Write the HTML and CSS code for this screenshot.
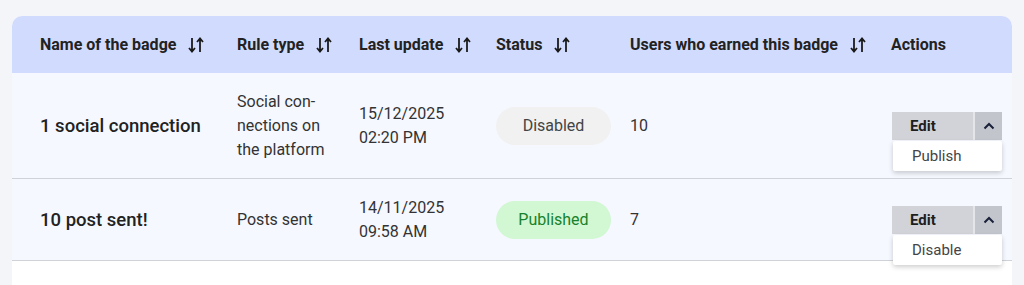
FILE: index.html
```html
<!DOCTYPE html>
<html lang="en">
<head>
    <meta charset="UTF-8">
    <meta name="viewport" content="width=device-width, initial-scale=1.0">
    <title>Badges</title>
    <link rel="stylesheet" href="styles.css">
</head>
<body>

<div class="table-card">
    <table class="badges-table">
        <thead>
            <tr>
                <th class="col-name"><span class="th-label">Name of the badge <svg class="sort-icon" viewBox="0 0 18 18"><path d="M5 2v13M2 12l3 3.5 3-3.5M13 16V3M10 6l3-3.5 3 3.5"/></svg></span></th>
                <th class="col-rule"><span class="th-label">Rule type <svg class="sort-icon" viewBox="0 0 18 18"><path d="M5 2v13M2 12l3 3.5 3-3.5M13 16V3M10 6l3-3.5 3 3.5"/></svg></span></th>
                <th class="col-date"><span class="th-label">Last update <svg class="sort-icon" viewBox="0 0 18 18"><path d="M5 2v13M2 12l3 3.5 3-3.5M13 16V3M10 6l3-3.5 3 3.5"/></svg></span></th>
                <th class="col-status"><span class="th-label">Status <svg class="sort-icon" viewBox="0 0 18 18"><path d="M5 2v13M2 12l3 3.5 3-3.5M13 16V3M10 6l3-3.5 3 3.5"/></svg></span></th>
                <th class="col-users"><span class="th-label">Users who earned this badge <svg class="sort-icon" viewBox="0 0 18 18"><path d="M5 2v13M2 12l3 3.5 3-3.5M13 16V3M10 6l3-3.5 3 3.5"/></svg></span></th>
                <th class="col-actions">Actions</th>
            </tr>
        </thead>
        <tbody>
            <tr>
                <td class="badge-name">1 social connection</td>
                <td class="rule-type">Social con&shy;nections on the platform</td>
                <td>15/12/2025<br>02:20 PM</td>
                <td><span class="status status-disabled">Disabled</span></td>
                <td>10</td>
                <td>
                    <div class="action-group">
                        <div class="btn-split">
                            <button class="btn-edit">Edit</button>
                            <button class="btn-toggle"><svg viewBox="0 0 12 8"><path d="M1.5 6.5L6 2l4.5 4.5"/></svg></button>
                        </div>
                        <div class="action-menu">Publish</div>
                    </div>
                </td>
            </tr>
            <tr>
                <td class="badge-name">10 post sent!</td>
                <td class="rule-type">Posts sent</td>
                <td>14/11/2025<br>09:58 AM</td>
                <td><span class="status status-published">Published</span></td>
                <td>7</td>
                <td>
                    <div class="action-group">
                        <div class="btn-split">
                            <button class="btn-edit">Edit</button>
                            <button class="btn-toggle"><svg viewBox="0 0 12 8"><path d="M1.5 6.5L6 2l4.5 4.5"/></svg></button>
                        </div>
                        <div class="action-menu">Disable</div>
                    </div>
                </td>
            </tr>
        </tbody>
    </table>
</div>

</body>
</html>
```

FILE: styles.css
```css
html, body {
    overflow: hidden;
}
body {
    font-family: Roboto, "Liberation Sans", Arial, sans-serif;
    margin: 0;
    padding: 16px 12px 0;
    background-color: #f4f5f9;
    color: #2b2b2b;
    height: 269px;
}
.table-card {
    background-color: white;
    border-radius: 10px 10px 0 0;
    overflow: hidden;
    height: 100%;
}
.badges-table {
    width: 100%;
    border-collapse: collapse;
    table-layout: fixed;
}
.badges-table th,
.badges-table td {
    box-sizing: border-box;
    padding: 0;
    text-align: left;
    vertical-align: middle;
}
.badges-table th {
    height: 57px;
    background-color: #d1dbfe;
    font-size: 16px;
    font-weight: 700;
    color: #222;
}
.th-label {
    display: inline-flex;
    align-items: center;
    gap: 11px;
}
.sort-icon {
    width: 18px;
    height: 18px;
    fill: none;
    stroke: #1a1a1a;
    stroke-width: 1.8;
}
.col-name { width: 225px; padding-left: 28px !important; }
.col-rule { width: 122px; }
.col-date { width: 137px; }
.col-status { width: 134px; }
.col-users { width: 261px; }
.col-actions { width: 121px; }

.badges-table tbody tr {
    background-color: #f5f8ff;
    border-bottom: 1px solid #cfd2d9;
}
.badges-table td {
    padding: 17px 0 16px;
    font-size: 16px;
    line-height: 24px;
    color: #333;
}
.badges-table td:first-child {
    padding-left: 28px;
}
.badge-name {
    font-size: 18.5px !important;
    font-weight: 500;
    color: #222 !important;
}
.rule-type {
    padding-right: 24px !important;
}
.status {
    display: inline-block;
    width: 115px;
    height: 38px;
    line-height: 38px;
    border-radius: 19px;
    text-align: center;
}
.status-disabled {
    background-color: #f1f1f1;
    color: #444;
}
.status-published {
    background-color: #d1f7d3;
    color: #17822b;
}
.action-group {
    position: relative;
    width: 110px;
    margin-left: 1px;
}
.btn-split {
    display: flex;
    height: 28px;
}
.btn-split button {
    border: none;
    margin: 0;
    cursor: pointer;
    font-family: inherit;
}
.btn-edit {
    flex: 1;
    background-color: #d1d3d9;
    font-size: 15px;
    font-weight: 700;
    color: #1e1e1e;
    text-align: left;
    padding: 0 0 0 18px;
    border-right: 2px solid #e4e5e9 !important;
}
.btn-toggle {
    width: 27px;
    background-color: #c3c5cc;
    padding: 0;
    display: flex;
    align-items: center;
    justify-content: center;
}
.btn-toggle svg {
    width: 12px;
    height: 8px;
    fill: none;
    stroke: #18203a;
    stroke-width: 2;
}
.action-menu {
    position: absolute;
    top: 29px;
    left: 1px;
    right: 0;
    height: 30px;
    line-height: 30px;
    padding-left: 19px;
    background-color: white;
    box-shadow: 0 2px 5px rgba(0, 0, 0, 0.2);
    border-radius: 2px;
    font-size: 15px;
    color: #444;
}
```
